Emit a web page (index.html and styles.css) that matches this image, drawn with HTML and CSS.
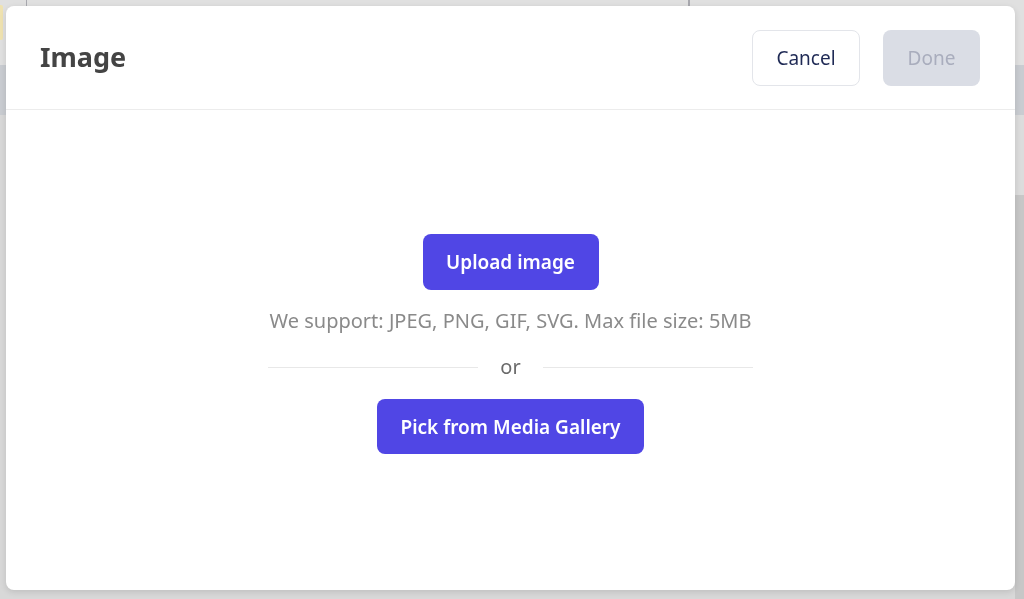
FILE: index.html
```html
<!DOCTYPE html>
<html lang="en">
<head>
<meta charset="utf-8">
<title>Image</title>
<link rel="stylesheet" href="styles.css">
</head>
<body>
<div class="backdrop">
  <div class="bg-top">
    <div class="bg-cell bg-cell-a"></div>
    <div class="bg-cell bg-cell-b"></div>
    <div class="bg-cell bg-cell-c"></div>
  </div>
  <div class="bg-toolbar"></div>
  <div class="bg-main">
    <div class="bg-canvas"></div>
    <div class="bg-side">
      <div class="bg-side-top"></div>
      <div class="bg-side-rest"></div>
    </div>
  </div>
</div>

<div class="modal" role="dialog" aria-labelledby="modal-title">
  <header class="modal-header">
    <h1 id="modal-title" class="modal-title">Image</h1>
    <div class="modal-actions">
      <button class="btn btn-outline" type="button">Cancel</button>
      <button class="btn btn-disabled" type="button" disabled>Done</button>
    </div>
  </header>
  <div class="modal-body">
    <div class="upload">
      <button class="btn btn-primary btn-upload" type="button">Upload image</button>
      <p class="upload-hint">We support: JPEG, PNG, GIF, SVG. Max file size: 5MB</p>
      <div class="divider"><span class="divider-line"></span><span class="divider-text">or</span><span class="divider-line"></span></div>
      <button class="btn btn-primary btn-gallery" type="button">Pick from Media Gallery</button>
    </div>
  </div>
</div>
</body>
</html>
```

FILE: styles.css
```css
* { box-sizing: border-box; }
html, body { margin: 0; padding: 0; height: 100%; }
body {
  font-family: "Noto Sans", "Open Sans", Arial, sans-serif;
  background: #d8d8d8;
  overflow: hidden;
}

/* backdrop (page behind the overlay) */
.backdrop { display: flex; flex-direction: column; height: 100%; }
.bg-top { height: 65px; display: flex; background: #e0e0e0; }
.bg-cell { height: 100%; }
.bg-cell-a { width: 27px; border-right: 1px solid #a8a8ae; }
.bg-cell-a::before {
  content: ""; display: block; width: 3px; height: 35px; margin-top: 5px;
  background: #efe2b0; border-radius: 0 2px 2px 0;
}
.bg-cell-b { width: 663px; border-right: 2px solid #a8a8ae; }
.bg-cell-c { flex: 1; }
.bg-toolbar { height: 50px; background: #c9ccd1; }
.bg-main { flex: 1; display: flex; }
.bg-canvas { flex: 1; background: #d8d8d8; }
.bg-side { width: 9px; display: flex; flex-direction: column; }
.bg-side-top { height: 80px; background: #dcdcdc; }
.bg-side-rest { flex: 1; background: #c7c7c7; }

/* modal */
.modal {
  position: fixed;
  left: 6px; top: 6px;
  width: 1009px; height: 584px;
  background: #ffffff;
  border-radius: 8px;
  box-shadow: 0 2px 6px rgba(0,0,0,0.12);
  display: flex; flex-direction: column;
}
.modal-header {
  height: 104px;
  border-bottom: 1px solid #ececec;
  display: flex; align-items: center; justify-content: space-between;
  padding: 0 35px 0 34px;
}
.modal-title {
  margin: 0;
  font-size: 27px; font-weight: 700;
  color: #444444;
  padding-bottom: 2px;
}
.modal-actions { display: flex; gap: 23px; }

.btn {
  font-family: inherit;
  height: 56px;
  border-radius: 8px;
  font-size: 19px;
  padding: 0;
  border: 1px solid transparent;
  white-space: nowrap;
  cursor: pointer;
  display: inline-flex; align-items: center; justify-content: center;
}
.btn-outline { background: #ffffff; border-color: #e3e5ea; color: #1f2a55; width: 108px; }
.btn-disabled { background: #dadde5; color: #a9adbd; width: 97px; cursor: default; }
.btn-primary { background: #5046e5; color: #ffffff; font-weight: 600; font-size: 19px; }

.modal-body {
  flex: 1;
  display: flex; align-items: flex-start; justify-content: center;
  padding-top: 124px;
}
.upload { display: flex; flex-direction: column; align-items: center; width: 485px; }
.btn-upload { width: 176px; height: 56px; }
.upload-hint {
  margin: 18px 0 0 0;
  font-size: 20px; color: #8a8a8a;
  white-space: nowrap;
  line-height: 26px;
}
.divider { display: flex; align-items: center; width: 100%; margin-top: 20px; gap: 22px; height: 26px; }
.divider-line { flex: 1; height: 1px; background: #e8e8e8; }
.divider-text { font-size: 20px; color: #6a6a6a; line-height: 26px; }
.btn-gallery { width: 267px; height: 55px; margin-top: 19px; }
```
